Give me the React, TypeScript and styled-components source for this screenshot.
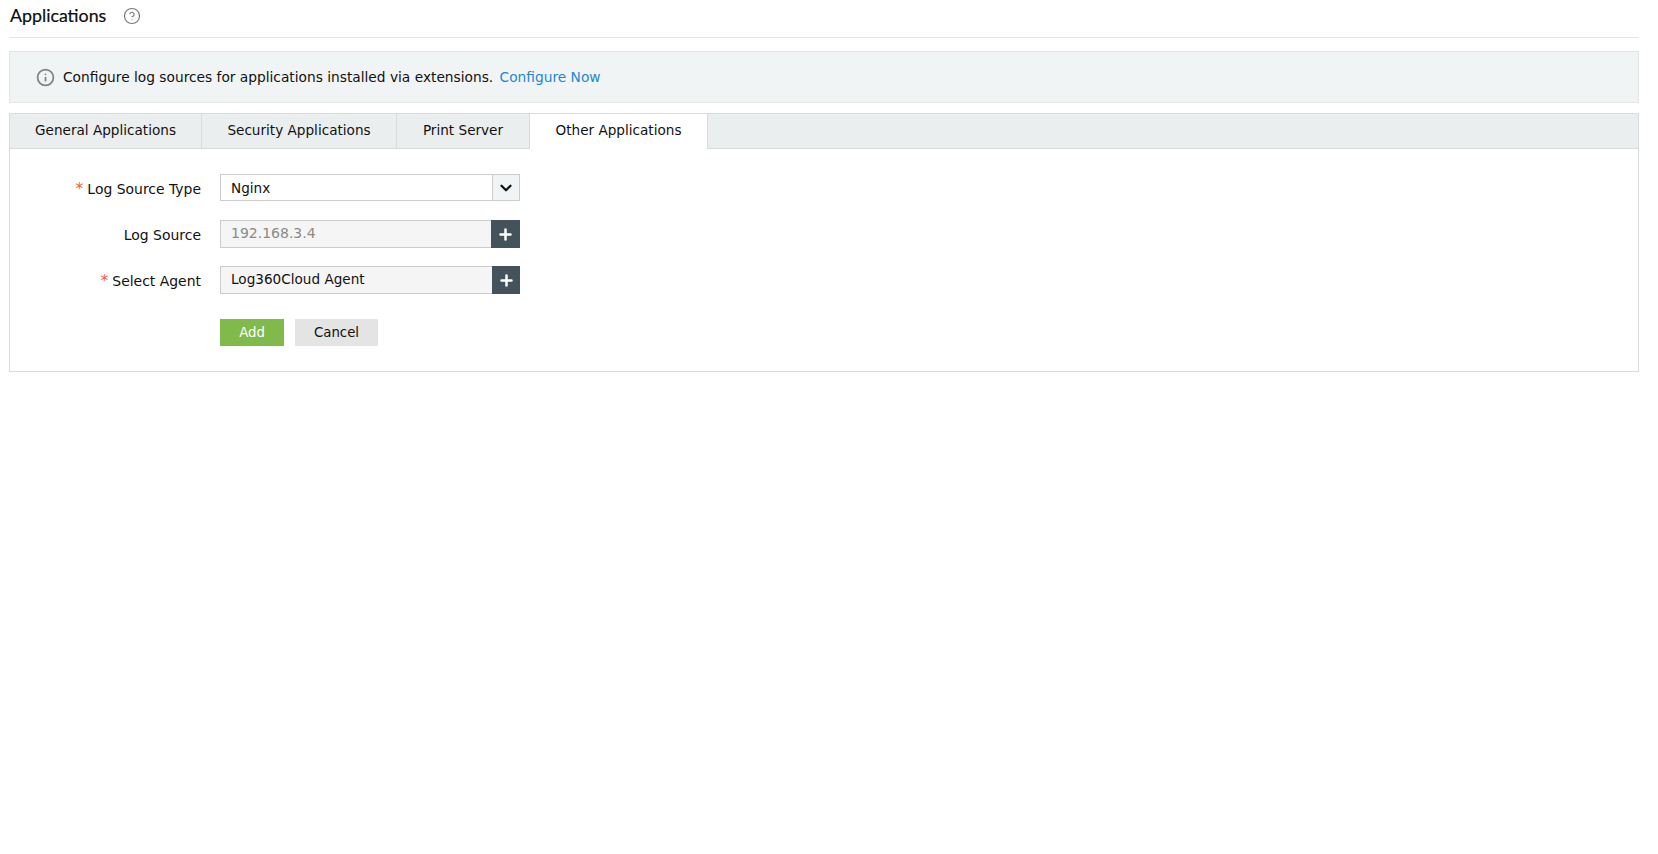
import React from "react";
import styled, { createGlobalStyle } from "styled-components";
import { ChevronDown, CircleHelp, Info, Plus } from "lucide-react";

const GlobalStyle = createGlobalStyle`
  html, body {
    margin: 0;
    padding: 0;
    background: #fff;
    font-family: "DejaVu Sans", Verdana, sans-serif;
    font-size: 13.6px;
    color: #111;
  }
`;

const Page = styled.div`
  padding: 0 19px 0 9px;
`;

const Header = styled.div`
  display: flex;
  align-items: center;
  height: 38px;
  padding-bottom: 6px;
  box-sizing: border-box;
  border-bottom: 1px solid #e3e5e5;
  gap: 17px;
`;

const Title = styled.h1`
  margin: -1px 0 0 1px;
  font-family: Lato, "Noto Sans", sans-serif;
  font-size: 17.8px;
  font-weight: 400;
  color: #0c0c0c;
  -webkit-text-stroke: 0.2px #0c0c0c;
`;

const HelpIcon = styled(CircleHelp)`
  color: #77797a;
`;

const Notice = styled.div`
  display: flex;
  align-items: center;
  height: 52px;
  box-sizing: border-box;
  margin-top: 13px;
  padding-left: 26px;
  gap: 8px;
  background: #f0f4f5;
  border: 1px solid #e3e5e5;
  font-size: 13.75px;
`;

const NoticeIcon = styled(Info)`
  color: #808284;
`;

const ConfigureLink = styled.a`
  color: #1e88d2;
  margin-left: 2px;
  cursor: pointer;
`;

const TabPanel = styled.div`
  margin-top: 10px;
  border: 1px solid #d8dcdc;
`;

const TabBar = styled.div`
  display: flex;
  height: 35px;
  background: #ebeeef;
`;

const Tab = styled.div<{ $active?: boolean; $width: number }>`
  display: flex;
  align-items: center;
  justify-content: center;
  box-sizing: border-box;
  width: ${(p) => p.$width}px;
  background: ${(p) => (p.$active ? "#fff" : "transparent")};
  border-right: 1px solid #d8dcdc;
  border-bottom: ${(p) => (p.$active ? "0" : "1px solid #d8dcdc")};
  padding-bottom: ${(p) => (p.$active ? "4px" : "3px")};
`;

const TabFill = styled.div`
  flex: 1;
  border-bottom: 1px solid #d8dcdc;
`;

const FormBody = styled.div`
  padding: 25px 0;
  display: flex;
  flex-direction: column;
`;

const Row = styled.div<{ $gap?: number }>`
  display: flex;
  align-items: center;
  margin-top: ${(p) => p.$gap ?? 0}px;
`;

const Label = styled.label<{ $drop?: number }>`
  width: 191px;
  margin-right: 19px;
  text-align: right;
  padding-top: ${(p) => p.$drop ?? 1}px;
  font-size: 13.95px;
`;

const Required = styled.span`
  color: #ee5f3f;
  font-size: 15.5px;
  line-height: 1;
  margin-right: 4px;
`;

const Field = styled.div<{ $bg: string; $height: number }>`
  display: flex;
  width: 300px;
  height: ${(p) => p.$height}px;
  box-sizing: border-box;
  border: 1px solid #cccccc;
  background: ${(p) => p.$bg};
`;

const FieldText = styled.div<{ $muted?: boolean; $lift: number }>`
  flex: 1;
  padding: 0 0 ${(p) => p.$lift}px 10px;
  display: flex;
  align-items: center;
  color: ${(p) => (p.$muted ? "#8a8a85" : "#111")};
  font-size: ${(p) => (p.$muted ? "14px" : "13.6px")};
`;

const ArrowButton = styled.div`
  width: 27px;
  padding-right: 1px;
  box-sizing: border-box;
  display: flex;
  align-items: center;
  justify-content: center;
  background: #f1f4f4;
  border-left: 1px solid #cccccc;
  color: #111;
`;

const PlusButton = styled.div<{ $width: number }>`
  width: ${(p) => p.$width}px;
  margin: -1px -1px -1px 0;
  display: flex;
  align-items: center;
  justify-content: center;
  background: #44525b;
  color: #fff;
`;

const Button = styled.button<{ $primary?: boolean; $width: number }>`
  width: ${(p) => p.$width}px;
  height: 27px;
  padding: 0;
  border: 0;
  font: inherit;
  font-size: 13.3px;
  cursor: pointer;
  background: ${(p) => (p.$primary ? "#7fba4b" : "#e4e4e4")};
  color: ${(p) => (p.$primary ? "#fff" : "#111")};
  margin-right: 11px;
`;

const tabs = [
  { name: "General Applications", width: 192 },
  { name: "Security Applications", width: 195 },
  { name: "Print Server", width: 133 },
  { name: "Other Applications", width: 178, active: true },
];

export default function App() {
  return (
    <Page>
      <GlobalStyle />
      <Header>
        <Title>Applications</Title>
        <HelpIcon size={18} strokeWidth={1.6} />
      </Header>
      <Notice>
        <NoticeIcon size={19} strokeWidth={2.2} />
        <span>
          Configure log sources for applications installed via extensions.{" "}
          <ConfigureLink>Configure Now</ConfigureLink>
        </span>
      </Notice>
      <TabPanel>
        <TabBar>
          {tabs.map((t) => (
            <Tab key={t.name} $active={t.active} $width={t.width}>
              {t.name}
            </Tab>
          ))}
          <TabFill />
        </TabBar>
        <FormBody>
          <Row>
            <Label $drop={3}>
              <Required>*</Required>Log Source Type
            </Label>
            <Field $bg="#fff" $height={27}>
              <FieldText $lift={0}>Nginx</FieldText>
              <ArrowButton>
                <ChevronDown size={18} strokeWidth={3} />
              </ArrowButton>
            </Field>
          </Row>
          <Row $gap={19}>
            <Label>Log Source</Label>
            <Field $bg="#f5f5f5" $height={28}>
              <FieldText $muted $lift={2}>
                192.168.3.4
              </FieldText>
              <PlusButton $width={29}>
                <Plus size={17} strokeWidth={3.5} />
              </PlusButton>
            </Field>
          </Row>
          <Row $gap={18}>
            <Label $drop={3}>
              <Required>*</Required>Select Agent
            </Label>
            <Field $bg="#f5f5f5" $height={28}>
              <FieldText $lift={2}>Log360Cloud Agent</FieldText>
              <PlusButton $width={28}>
                <Plus size={17} strokeWidth={3.5} />
              </PlusButton>
            </Field>
          </Row>
          <Row $gap={25}>
            <Label />
            <Button $primary $width={64}>
              Add
            </Button>
            <Button $width={83}>Cancel</Button>
          </Row>
        </FormBody>
      </TabPanel>
    </Page>
  );
}
